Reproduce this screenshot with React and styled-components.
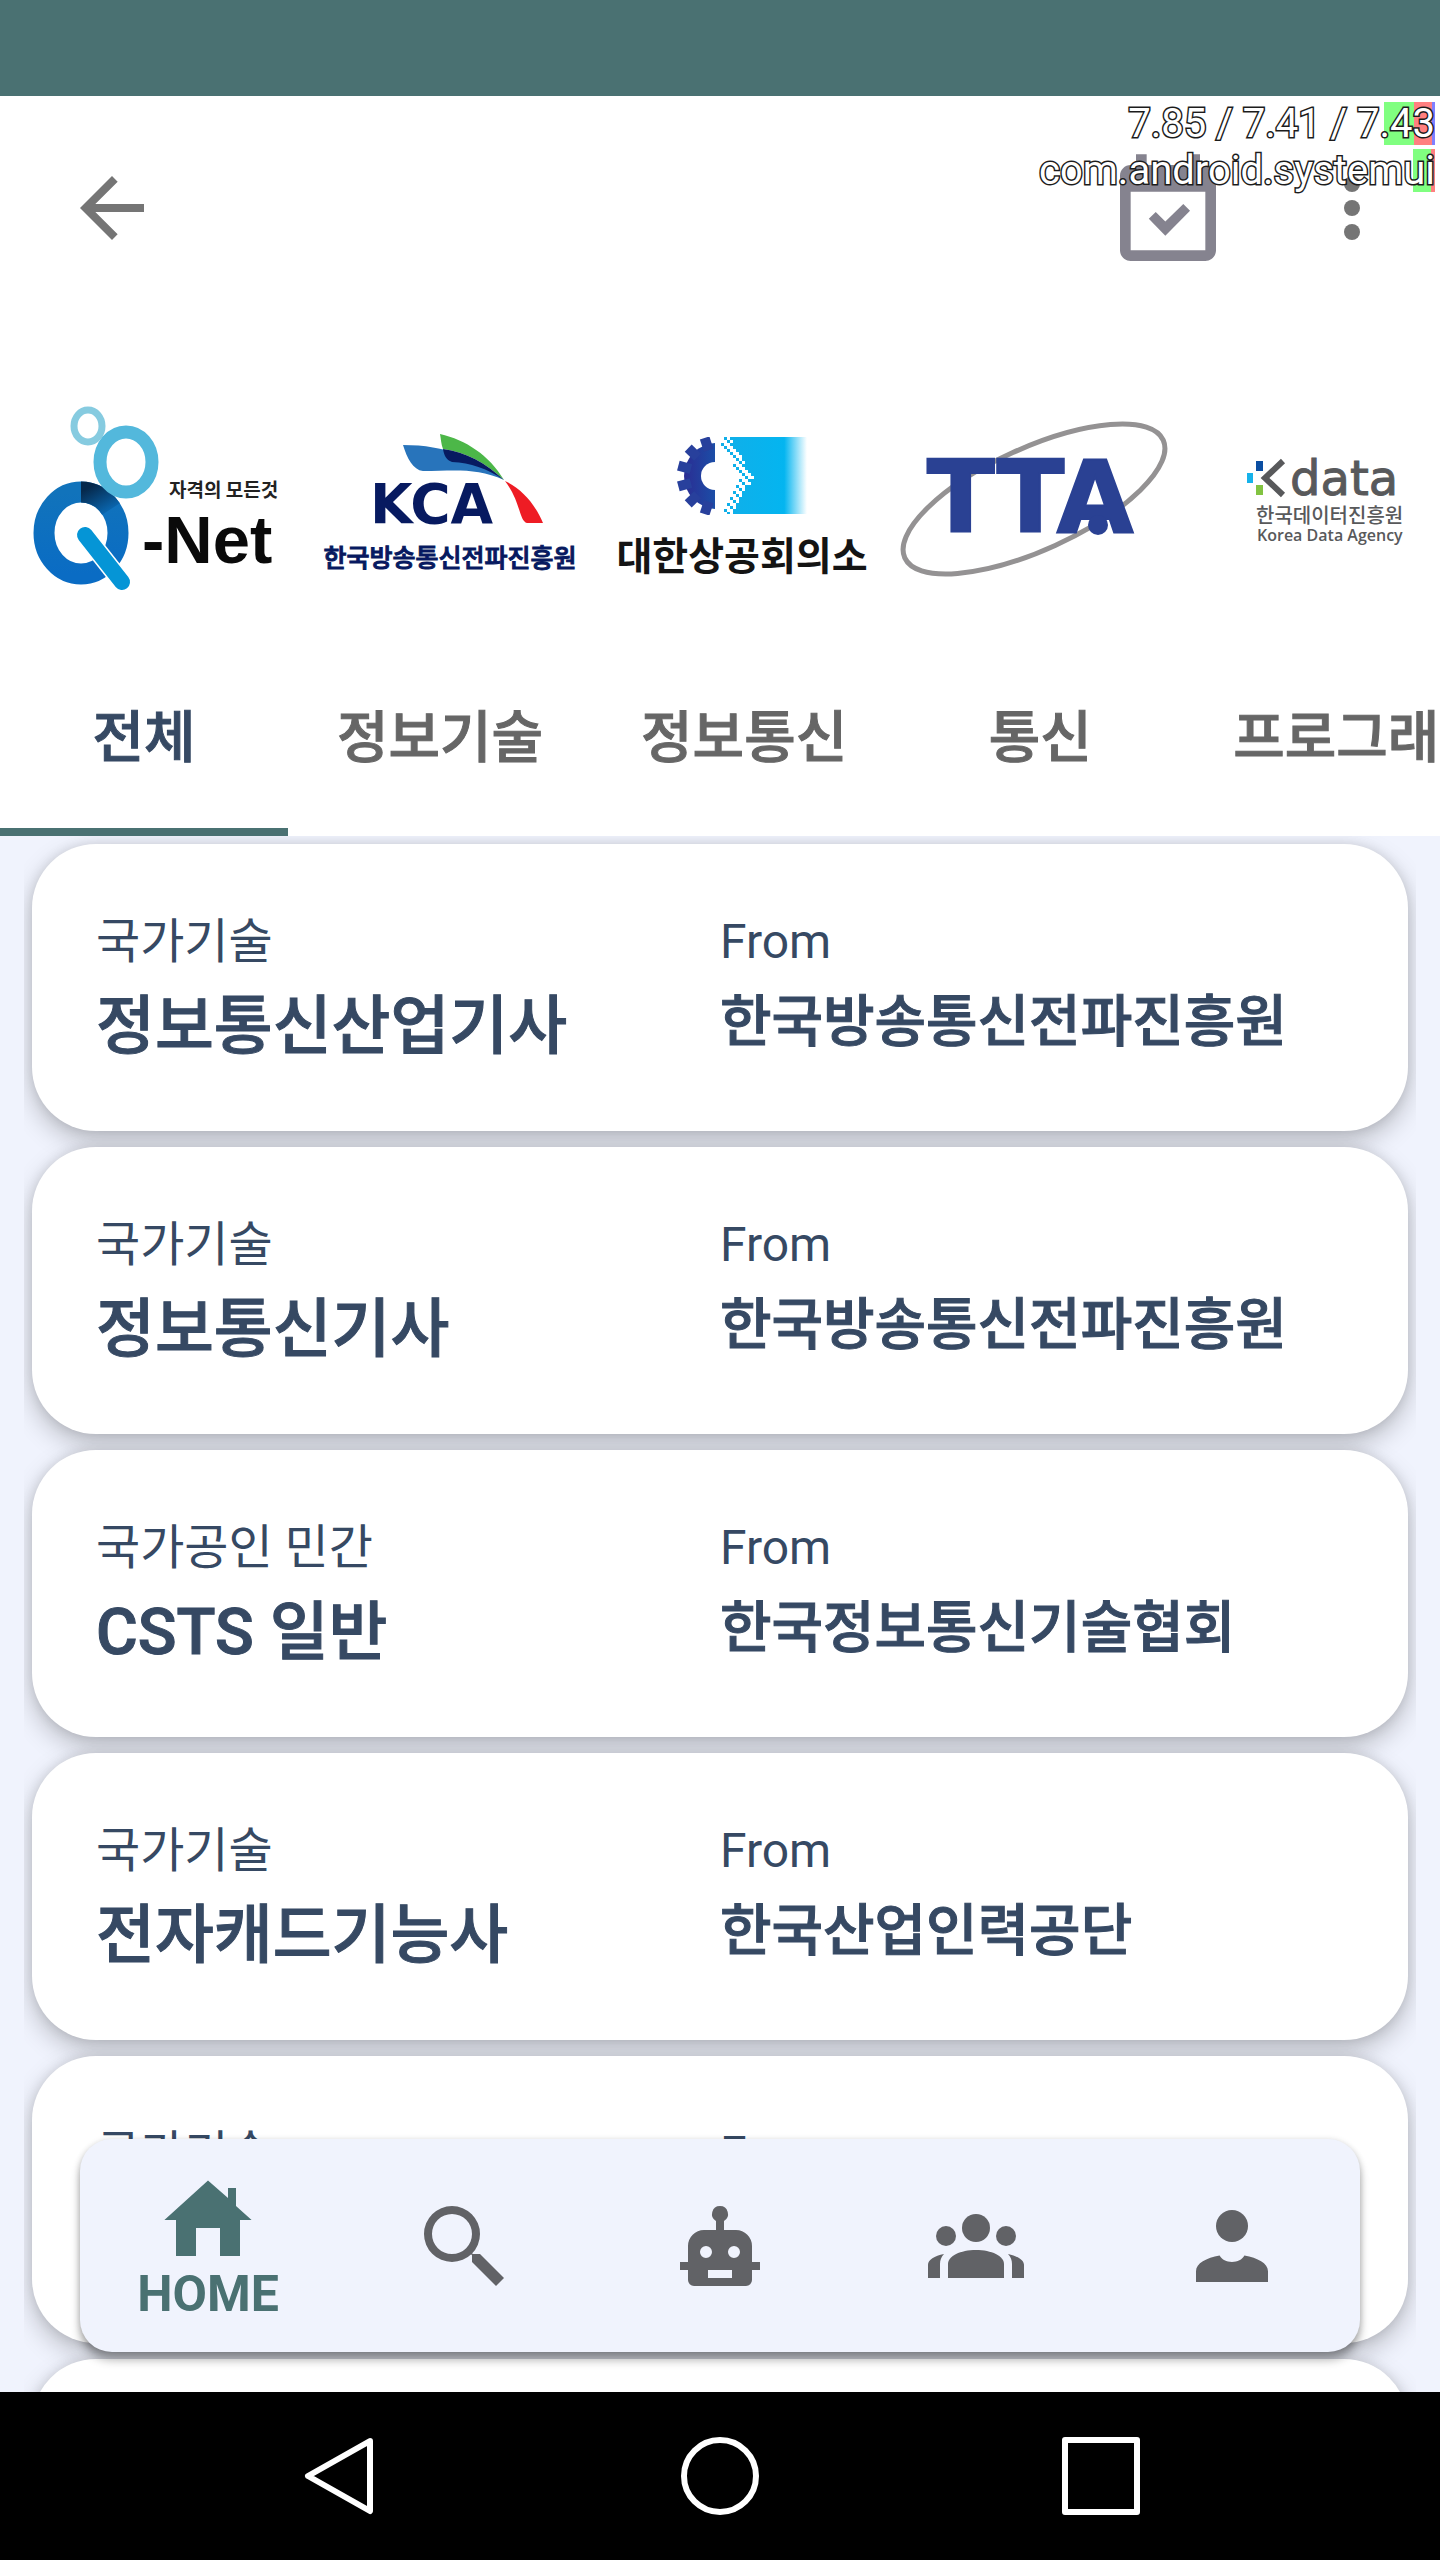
import React from "react";
import styled, { createGlobalStyle } from "styled-components";

const color = {
  brand: "#4a7172",
  ink: "#364963",
  surface: "#f0f3fd",
  muted: "#666666",
  icon: "#757575",
  navIcon: "#616266",
};

const GlobalStyle = createGlobalStyle`
  *, *::before, *::after { box-sizing: border-box; }
  body {
    margin: 0;
    background: #ffffff;
    font-family: Roboto, "Noto Sans CJK KR", sans-serif;
  }
  button {
    margin: 0;
    padding: 0;
    border: 0;
    background: none;
    color: inherit;
    font: inherit;
    cursor: pointer;
  }
  svg { display: block; }
`;

const Screen = styled.div`
  display: flex;
  flex-direction: column;
  height: 100vh;
  overflow: hidden;
  position: relative;
`;

const StatusBar = styled.div`
  flex: none;
  height: 96px;
  background: ${color.brand};
`;

const Header = styled.header`
  flex: none;
  display: flex;
  align-items: center;
  justify-content: space-between;
  height: 224px;
  padding: 0 40px 0 64px;
  color: ${color.icon};
`;

const HeaderActions = styled.div`
  display: flex;
  align-items: center;
  gap: 72px;
`;

const IconButton = styled.button`
  color: ${(p) => p.$tone || "inherit"};
  padding-top: ${(p) => (p.$drop ? "10px" : "0")};
`;

const LoadMonitor = styled.div`
  position: absolute;
  top: 102px;
  right: 5px;
  display: flex;
  flex-direction: column;
  align-items: flex-end;
  gap: 4px;
  pointer-events: none;
`;

const LoadLine = styled.div`
  display: flex;
  justify-content: flex-end;
  position: relative;
  height: 43px;
  font-size: 40px;
  line-height: 43px;
  color: #ffffff;
  -webkit-text-stroke: 3px #1c1c1c;
  paint-order: stroke fill;
  white-space: nowrap;
`;

const LoadBars = styled.span`
  position: absolute;
  inset: 0 0 0 auto;
  display: flex;
  z-index: -1;
`;

const LoadBar = styled.i`
  width: ${(p) => p.$size}px;
  background: ${(p) => p.$fill};
`;

const Agencies = styled.section`
  flex: none;
  display: grid;
  grid-template-columns: repeat(5, 1fr);
  gap: 24px;
  padding: 48px 0 8px 24px;
  margin-right: -20px;
`;

const AgencyButton = styled.button`
  display: flex;
  justify-content: center;
`;

const Tabs = styled.div`
  flex: none;
  display: flex;
  height: 192px;
  overflow: hidden;
`;

const Tab = styled.button`
  flex: none;
  min-width: 288px;
  padding: 0 49px;
  border-top: 4px solid transparent;
  border-bottom: 8px solid ${(p) => (p.$active ? color.brand : "transparent")};
  color: ${(p) => (p.$active ? color.ink : color.muted)};
  font-size: 56px;
  font-weight: 500;
  line-height: 64px;
  white-space: nowrap;
  -webkit-text-stroke: 1px currentColor;
`;

const Content = styled.main`
  flex: 1;
  min-height: 0;
  overflow: hidden;
  position: relative;
  background: ${color.surface};
`;

const CardList = styled.ul`
  list-style: none;
  display: flex;
  flex-direction: column;
  gap: 16px;
  height: 100%;
  margin: 0 24px;
  padding: 8px;
  overflow: hidden;
`;

const Card = styled.li`
  flex: none;
  display: grid;
  grid-template-columns: 1fr 1fr;
  min-height: 287px;
  padding: 70px 64px 64px;
  border-radius: 64px;
  background: #ffffff;
  color: ${color.ink};
  box-shadow: 0 10px 26px rgba(0, 0, 0, 0.23), 0 0 12px rgba(0, 0, 0, 0.1);
`;

const Field = styled.div`
  display: flex;
  flex-direction: column;
  gap: 20px;
  min-width: 0;
`;

const Label = styled.span`
  font-size: 48px;
  line-height: 56px;
`;

const Title = styled.strong`
  font-size: 64px;
  font-weight: 500;
  line-height: 74px;
  -webkit-text-stroke: 1px currentColor;
`;

const Agency = styled.strong`
  font-size: 56px;
  font-weight: 500;
  line-height: 64px;
  white-space: nowrap;
  -webkit-text-stroke: 1px currentColor;
`;

const BottomBar = styled.nav`
  position: absolute;
  left: 80px;
  right: 80px;
  bottom: 40px;
  display: grid;
  grid-template-columns: repeat(5, 1fr);
  height: 213px;
  border-radius: 32px;
  background: ${color.surface};
  box-shadow: 0 8px 10px rgba(0, 0, 0, 0.3), 0 1px 6px rgba(0, 0, 0, 0.16);
`;

const NavItem = styled.button`
  display: flex;
  flex-direction: column;
  align-items: center;
  justify-content: center;
  color: ${(p) => (p.$active ? color.brand : color.navIcon)};
  font-size: 50px;
  font-weight: 700;
  line-height: 56px;
`;

const SystemBar = styled.footer`
  flex: none;
  display: flex;
  align-items: center;
  justify-content: center;
  gap: 301px;
  height: 168px;
  background: #000000;
  color: #ffffff;
`;

function Icon({ size = 96, children }) {
  return (
    <svg width={size} height={size} viewBox="0 0 24 24" fill="currentColor" fillRule="evenodd" aria-hidden="true">
      {children}
    </svg>
  );
}

const kr = '"Noto Sans CJK KR", sans-serif';

function QNetLogo() {
  return (
    <svg width="268" height="268" viewBox="0 0 268 268" role="img">
      <defs>
        <linearGradient id="qnetRing" x1="0" y1="0" x2="0" y2="1">
          <stop offset="0" stopColor="#1173bb" />
          <stop offset="1" stopColor="#0a6cc4" />
        </linearGradient>
        <linearGradient id="qnetShade" x1="0" y1="0" x2="1" y2="1">
          <stop offset="0" stopColor="#06294c" />
          <stop offset="1" stopColor="#0a65ad" />
        </linearGradient>
      </defs>
      <ellipse cx="64" cy="58" rx="14" ry="16" fill="none" stroke="#86cbe0" strokeWidth="7" />
      <ellipse cx="57" cy="165" rx="37" ry="41" fill="none" stroke="url(#qnetRing)" strokeWidth="21" />
      <path d="M57 124c12 0 23 6 30 17" fill="none" stroke="url(#qnetShade)" strokeWidth="21" />
      <ellipse cx="102" cy="94" rx="26" ry="30" fill="none" stroke="#53b8dc" strokeWidth="13" />
      <path d="M61 167l37 47" stroke="#ffffff" strokeWidth="19" strokeLinecap="butt" />
      <path d="M61 167l37 47" stroke="#0595d6" strokeWidth="16" strokeLinecap="round" />
      <text x="145" y="129" fontFamily={kr} fontSize="19" fontWeight="700" fill="#222222">자격의 모든것</text>
      <text x="118" y="195" fontFamily='"Liberation Sans", sans-serif' fontSize="67" fontWeight="700" fill="#0a0a0a">-Net</text>
    </svg>
  );
}

function KcaLogo() {
  return (
    <svg width="268" height="268" viewBox="0 0 268 268" role="img">
      <path d="M87 77C130 77 160 90 188 112C160 99 136 103 107 103C97 102 91 90 87 77z" fill="#2874bb" />
      <path d="M124 66C150 72 173 87 188 112C170 95 150 84 127 81C125 76 125 71 124 66z" fill="#4cb748" />
      <path d="M127 81C150 84 170 95 188 112C170 100 155 95 136 94C130 92 128 87 127 81z" fill="#071a60" />
      <path d="M189 113C206 121 219 136 227 155H211C203 153 205 134 189 113z" fill="#ee1c24" />
      <text x="54" y="155" fontFamily='"DejaVu Sans", sans-serif' fontSize="55" fontWeight="700" fill="#071a60">KCA</text>
      <text x="134" y="199" textAnchor="middle" fontFamily={kr} fontSize="25" fontWeight="500" fill="#071a60" stroke="#071a60" strokeWidth="1">한국방송통신전파진흥원</text>
    </svg>
  );
}

function KcciLogo() {
  const specks = [];
  for (let row = 0; row < 26; row += 1) {
    const reach = 5 + Math.round((13 - Math.abs(13 - row)) * 0.6);
    for (let col = 0; col < reach; col += 1) {
      if (col < reach - 4 || (row * 7 + col * 5) % 3 !== 0) {
        specks.push(<rect key={`${row}-${col}`} x={107 + col * 3} y={69 + row * 3} width="3" height="3" />);
      }
    }
  }
  const teeth = [-72, -44, -15, 15, 44, 72];
  return (
    <svg width="268" height="268" viewBox="0 0 268 268" role="img">
      <defs>
        <linearGradient id="kcciField" x1="0" x2="1">
          <stop offset="0" stopColor="#12aee8" />
          <stop offset="0.75" stopColor="#04b5f0" />
          <stop offset="1" stopColor="#ffffff" />
        </linearGradient>
        <linearGradient id="kcciGear" x1="0" x2="1">
          <stop offset="0" stopColor="#2b2d93" />
          <stop offset="1" stopColor="#0a72bd" />
        </linearGradient>
        <clipPath id="kcciHalf"><rect x="60" y="69" width="47" height="78" /></clipPath>
      </defs>
      <rect x="108" y="69" width="91" height="77" fill="url(#kcciField)" />
      <g fill="#ffffff">{specks}</g>
      <g clipPath="url(#kcciHalf)">
        <circle cx="109" cy="108" r="33" fill="url(#kcciGear)" />
        {teeth.map((angle) => (
          <path key={angle} d="M69 103h13v10H69z" transform={`rotate(${angle} 109 108)`} fill="#28409c" />
        ))}
      </g>
      <circle cx="107" cy="108" r="14" fill="#ffffff" />
      <text x="134" y="202" textAnchor="middle" fontFamily={kr} fontSize="39" fontWeight="700" fill="#141414">대한상공회의소</text>
    </svg>
  );
}

function TtaLogo() {
  return (
    <svg width="268" height="268" viewBox="0 0 268 268" role="img">
      <ellipse cx="134" cy="131" rx="142" ry="51" transform="rotate(-24.5 134 131)" fill="none" stroke="#949293" strokeWidth="5" />
      <text x="27" y="164" fontFamily='"DejaVu Sans", sans-serif' fontSize="99" fontWeight="700" fill="#2a4193" stroke="#2a4193" strokeWidth="2">TTA</text>
      <circle cx="198" cy="157" r="10" fill="#2a4193" />
    </svg>
  );
}

function KdataLogo() {
  return (
    <svg width="268" height="268" viewBox="0 0 268 268" role="img">
      <rect x="64" y="93" width="7" height="10" fill="#0b4ea2" />
      <rect x="55" y="105" width="6" height="10" fill="#16b2ea" />
      <rect x="64" y="117" width="7" height="10" fill="#82c341" />
      <path d="M91 93L73 110L91 127" fill="none" stroke="#58595b" strokeWidth="6" />
      <text x="98" y="127" fontFamily='"DejaVu Sans", sans-serif' fontSize="48" fill="#58595b" stroke="#58595b" strokeWidth="1">data</text>
      <text x="64" y="155" fontFamily={kr} fontSize="20" fontWeight="500" fill="#58595b">한국데이터진흥원</text>
      <text x="65" y="173" fontFamily='"Open Sans", sans-serif' fontSize="16" fontWeight="600" fill="#58595b">Korea Data Agency</text>
    </svg>
  );
}

const agencies = [
  ["Q-Net", QNetLogo],
  ["KCA", KcaLogo],
  ["대한상공회의소", KcciLogo],
  ["TTA", TtaLogo],
  ["K data", KdataLogo],
];

const tabs = ["전체", "정보기술", "정보통신", "통신", "프로그래"];

const certificates = [
  { kind: "국가기술", title: "정보통신산업기사", from: "한국방송통신전파진흥원" },
  { kind: "국가기술", title: "정보통신기사", from: "한국방송통신전파진흥원" },
  { kind: "국가공인 민간", title: "CSTS 일반", from: "한국정보통신기술협회" },
  { kind: "국가기술", title: "전자캐드기능사", from: "한국산업인력공단" },
  { kind: "국가기술" },
  {},
];

function CertificateCard({ kind, title, from }) {
  return (
    <Card>
      {kind && (
        <>
          <Field>
            <Label>{kind}</Label>
            {title && <Title>{title}</Title>}
          </Field>
          <Field>
            <Label>From</Label>
            {from && <Agency>{from}</Agency>}
          </Field>
        </>
      )}
    </Card>
  );
}

export default function App() {
  return (
    <>
      <GlobalStyle />
      <Screen>
        <StatusBar />
        <Header>
          <IconButton type="button" aria-label="Back">
            <Icon>
              <path d="M20 11H7.83l5.59-5.59L12 4l-8 8 8 8 1.41-1.41L7.83 13H20z" />
            </Icon>
          </IconButton>
          <HeaderActions>
            <IconButton type="button" aria-label="Calendar" $tone="#85838f" $drop>
              <Icon size={128}>
                <path d="M19 3h-1V1h-2v2H8V1H6v2H5c-1.1 0-2 .9-2 2v14c0 1.100.9 2 2 2h14c1.100 0 2-.9 2-2V5c0-1.100-.9-2-2-2zm0 16H5V8h14z" />
                <path d="M8.400 13.100l1.300-1.300 1.800 1.800 3.370-3.300 1.260 1.300-4.630 4.650z" />
              </Icon>
            </IconButton>
            <IconButton type="button" aria-label="More">
              <Icon>
                <circle cx="12" cy="6" r="2" />
                <circle cx="12" cy="12" r="2" />
                <circle cx="12" cy="18" r="2" />
              </Icon>
            </IconButton>
          </HeaderActions>
        </Header>

        <Agencies>
          {agencies.map(([name, Logo]) => (
            <AgencyButton type="button" key={name} aria-label={name}>
              <Logo />
            </AgencyButton>
          ))}
        </Agencies>

        <Tabs role="tablist">
          {tabs.map((tab, index) => (
            <Tab type="button" role="tab" key={tab} aria-selected={index === 0} $active={index === 0}>
              {tab}
            </Tab>
          ))}
        </Tabs>

        <Content>
          <CardList>
            {certificates.map((item, index) => (
              <CertificateCard key={index} {...item} />
            ))}
          </CardList>
          <BottomBar>
            <NavItem type="button" $active>
              <Icon>
                <path d="M12 2.600L1.100 12.500H4v9h5v-7h6v7h5v-9h2.900L19 9V4.500h-2V7z" />
              </Icon>
              HOME
            </NavItem>
            <NavItem type="button" aria-label="Search">
              <Icon>
                <path d="M9 2a7 7 0 1 0 0 14a7 7 0 1 0 0-14zm0 2a5 5 0 1 1 0 10a5 5 0 1 1 0-10z" />
                <path d="M13.300 13l.9 1H16l6 6-2 2-6-6v-1.700l-.9-.9z" />
              </Icon>
            </NavItem>
            <NavItem type="button" aria-label="Robot">
              <Icon>
                <path d="M12 2a2 2 0 0 1 1 3.730V8h3a4 4 0 0 1 4 4v4h2v2h-2v2.500a1.500 1.500 0 0 1-1.500 1.500h-13A1.500 1.500 0 0 1 4 20.500V18H2v-2h2v-4a4 4 0 0 1 4-4h3V5.730A2 2 0 0 1 12 2zM8.500 12a1.500 1.500 0 1 0 0 3a1.500 1.500 0 0 0 0-3zm7 0a1.500 1.500 0 1 0 0 3a1.500 1.500 0 0 0 0-3zM9 18v2h6v-2z" />
              </Icon>
            </NavItem>
            <NavItem type="button" aria-label="Groups">
              <Icon>
                <circle cx="12" cy="7.500" r="3.500" />
                <circle cx="4.500" cy="9.500" r="2.500" />
                <circle cx="19.500" cy="9.500" r="2.500" />
                <path d="M5 20v-3.500C5 14.500 8.100 13 12 13s7 1.500 7 3.500V20z" />
                <path d="M4 14c-2.400.5-4 1.500-4 2.700V20h3v-3.500c0-.9.3-1.800 1-2.500z" />
                <path d="M20 14c2.400.5 4 1.500 4 2.700V20h-3v-3.500c0-.9-.3-1.800-1-2.500z" />
              </Icon>
            </NavItem>
            <NavItem type="button" aria-label="Profile">
              <Icon>
                <circle cx="12" cy="7" r="4" />
                <path d="M8.900 14.400C5.600 15 3 16.300 3 18.300V21h18v-2.700c0-2-2.600-3.300-5.900-3.900C14.500 15.500 13.400 16 12 16s-2.500-.5-3.100-1.600z" />
              </Icon>
            </NavItem>
          </BottomBar>
        </Content>

        <SystemBar>
          <button type="button" aria-label="System back">
            <svg width="80" height="80" viewBox="0 0 80 80" fill="none" stroke="currentColor" strokeWidth="6" strokeLinejoin="round" aria-hidden="true">
              <path d="M71 5L9 40L71 75z" />
            </svg>
          </button>
          <button type="button" aria-label="System home">
            <svg width="80" height="80" viewBox="0 0 80 80" fill="none" stroke="currentColor" strokeWidth="6" aria-hidden="true">
              <circle cx="40" cy="40" r="36" />
            </svg>
          </button>
          <button type="button" aria-label="Recent apps">
            <svg width="80" height="80" viewBox="0 0 80 80" fill="none" stroke="currentColor" strokeWidth="6" strokeLinejoin="round" aria-hidden="true">
              <rect x="4" y="4" width="72" height="72" />
            </svg>
          </button>
        </SystemBar>

        <LoadMonitor>
          <LoadLine>
            <LoadBars>
              <LoadBar $size={30} $fill="#80ff80" />
              <LoadBar $size={18} $fill="#ff8080" />
              <LoadBar $size={3} $fill="#8080ff" />
            </LoadBars>
            7.85 / 7.41 / 7.43
          </LoadLine>
          <LoadLine>
            <LoadBars>
              <LoadBar $size={18} $fill="#80ff80" />
              <LoadBar $size={4} $fill="#ff8080" />
            </LoadBars>
            com.android.systemui
          </LoadLine>
        </LoadMonitor>
      </Screen>
    </>
  );
}
